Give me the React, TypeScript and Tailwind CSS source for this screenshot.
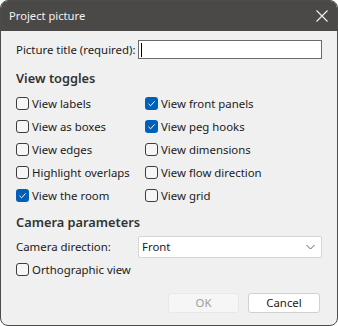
import React from "react";

function Check({ checked, label }: { checked?: boolean; label: string }) {
  return (
    <label className="flex h-[23px] items-center gap-[3px] whitespace-nowrap">
      {checked ? (
        <span className="flex h-[13px] w-[13px] shrink-0 items-center justify-center rounded-[3px] bg-[#005fb8]">
          <svg width="9" height="9" viewBox="0 0 9 9" fill="none">
            <path d="M1.5 4.8 L3.6 6.8 L7.6 2.4" stroke="#ffffff" strokeWidth="1" />
          </svg>
        </span>
      ) : (
        <span className="h-[13px] w-[13px] shrink-0 rounded-[3px] border border-[#3d3d3d] bg-[#f6f6f6]" />
      )}
      <span>{label}</span>
    </label>
  );
}

export default function App() {
  return (
    <div className="h-[326px] w-[338px] bg-white font-['Noto_Sans',sans-serif] text-[11.4px] text-[#1b1b1b]">
      <div className="flex h-full w-full flex-col overflow-hidden rounded-[8px] border border-[#4c4c4a] bg-[#f0f0f0]">
        {/* title bar */}
        <div className="flex h-[30px] shrink-0 items-center justify-between bg-[#4a4947] pl-[8px] pr-[9px] text-[#f2f2f2]">
          <span className="text-[11.2px]">Project picture</span>
          <svg width="12" height="12" viewBox="0 0 12 12" fill="none">
            <path d="M0.5 0.5 L11.5 11.5 M11.5 0.5 L0.5 11.5" stroke="#f2f2f2" strokeWidth="1.1" />
          </svg>
        </div>

        <div className="flex flex-col pl-[15px] pr-[15px]">
          <div className="mt-[9px] flex h-[19px] items-center">
            <span className="w-[122px] shrink-0 whitespace-nowrap">Picture title (required):</span>
            <div className="flex h-[19px] flex-1 items-center border border-[#6a6a6a] bg-white pl-[2px]">
              <span className="h-[14px] w-px bg-black" />
            </div>
          </div>

          <div className="mt-[10px] flex h-[20px] items-center text-[12.8px] font-semibold text-[#333333]">
            View toggles
          </div>

          <div className="mt-[3px] grid grid-cols-[129px_1fr]">
            <Check label="View labels" />
            <Check checked label="View front panels" />
            <Check label="View as boxes" />
            <Check checked label="View peg hooks" />
            <Check label="View edges" />
            <Check label="View dimensions" />
            <Check label="Highlight overlaps" />
            <Check label="View flow direction" />
            <Check checked label="View the room" />
            <Check label="View grid" />
          </div>

          <div className="mt-[6px] flex h-[20px] items-center text-[12.8px] font-semibold text-[#333333]">
            Camera parameters
          </div>

          <div className="mt-[3px] flex h-[22px] items-center">
            <span className="w-[122px] shrink-0 whitespace-nowrap">Camera direction:</span>
            <div className="flex h-[22px] flex-1 items-center justify-between rounded-[2px] border border-[#d6d6d6] bg-white pl-[3px] pr-[6px]">
              <span>Front</span>
              <svg width="9" height="6" viewBox="0 0 9 6" fill="none">
                <path d="M0.5 1 L4.5 5 L8.5 1" stroke="#606060" strokeWidth="1" />
              </svg>
            </div>
          </div>

          <Check label="Orthographic view" />

          <div className="mt-[12px] flex justify-end gap-[9px] pr-[2px]">
            <button className="h-[20px] w-[71px] rounded-[3px] border border-[#e8e8e8] bg-[#f6f6f6] text-[#9d9d9d]">
              OK
            </button>
            <button className="h-[20px] w-[72px] rounded-[3px] border border-[#d0d0d0] bg-white text-[#1b1b1b]">
              Cancel
            </button>
          </div>
        </div>
      </div>
    </div>
  );
}
